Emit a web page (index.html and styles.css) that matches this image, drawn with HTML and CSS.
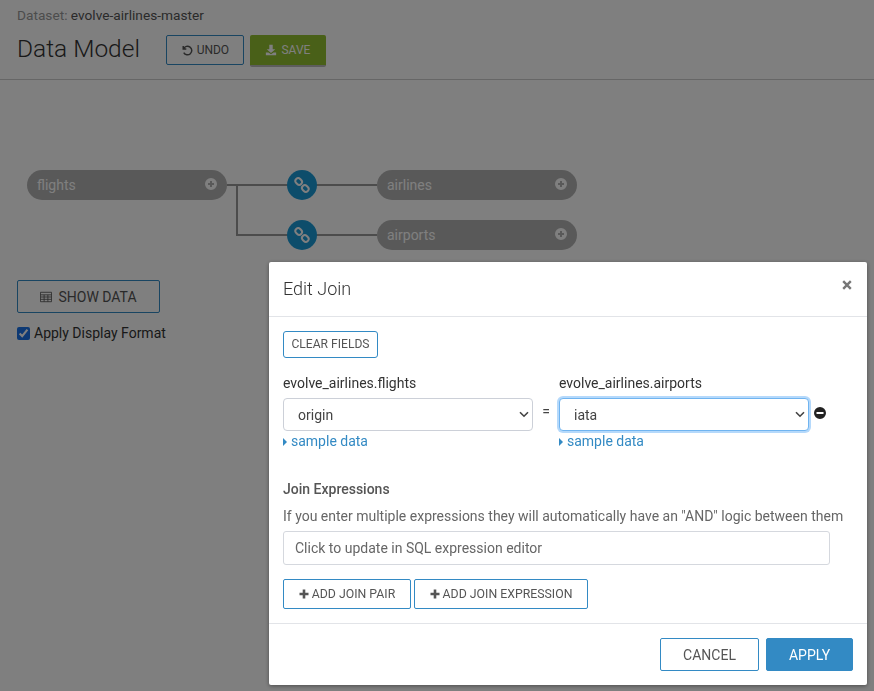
FILE: index.html
```html
<!DOCTYPE html>
<html lang="en">
<head>
  <meta charset="UTF-8">
  <title>Data Model</title>
  <link rel="stylesheet" href="styles.css">
</head>
<body>
  <div class="page-head">
    <div class="dataset"><span class="dataset-label">Dataset:</span> evolve-airlines-master</div>
    <div class="title-row">
      <h1>Data Model</h1>
      <button class="btn btn-undo">
        <svg class="icon" viewBox="0 0 14 14"><path d="M2.6 2.2v3.6h3.6M3 5.6a5 5 0 1 1 .2 4.4" fill="none" stroke="currentColor" stroke-width="1.7"/></svg>
        UNDO
      </button>
      <button class="btn btn-save">
        <svg class="icon" viewBox="0 0 14 14"><path d="M5 1h4v5h3L7 10.5 2 6h3z M1 10h3l3 2 3-2h3v3H1z" fill="currentColor"/></svg>
        SAVE
      </button>
    </div>
  </div>

  <div class="diagram">
    <svg class="links" width="874" height="120" viewBox="0 0 874 120">
      <path d="M227 35H377M237 35V85H377" fill="none" stroke="#999" stroke-width="2"/>
    </svg>

    <div class="node node-flights">flights
      <svg class="node-add" viewBox="0 0 12 12"><path d="M6 0a6 6 0 1 0 0 12A6 6 0 0 0 6 0zM5 3h2v2h2v2H7v2H5V7H3V5h2z" fill="currentColor" fill-rule="evenodd"/></svg>
    </div>
    <div class="node node-airlines">airlines
      <svg class="node-add" viewBox="0 0 12 12"><path d="M6 0a6 6 0 1 0 0 12A6 6 0 0 0 6 0zM5 3h2v2h2v2H7v2H5V7H3V5h2z" fill="currentColor" fill-rule="evenodd"/></svg>
    </div>
    <div class="node node-airports">airports
      <svg class="node-add" viewBox="0 0 12 12"><path d="M6 0a6 6 0 1 0 0 12A6 6 0 0 0 6 0zM5 3h2v2h2v2H7v2H5V7H3V5h2z" fill="currentColor" fill-rule="evenodd"/></svg>
    </div>

    <div class="link link-airlines">
      <svg viewBox="0 0 18 18"><g fill="none" stroke="currentColor" stroke-width="2"><rect x="2.2" y="2.7" width="7" height="5.6" rx="2.8" transform="rotate(45 5.7 5.5)"/><rect x="8.8" y="9.7" width="7" height="5.6" rx="2.8" transform="rotate(45 12.3 12.5)"/></g></svg>
    </div>
    <div class="link link-airports">
      <svg viewBox="0 0 18 18"><g fill="none" stroke="currentColor" stroke-width="2"><rect x="2.2" y="2.7" width="7" height="5.6" rx="2.8" transform="rotate(45 5.7 5.5)"/><rect x="8.8" y="9.7" width="7" height="5.6" rx="2.8" transform="rotate(45 12.3 12.5)"/></g></svg>
    </div>
  </div>

  <div class="data-controls">
    <button class="btn btn-show">
      <svg class="icon" viewBox="0 0 14 12"><path d="M.5.5h13v11H.5zM.5 3.5h13M.5 6h13M.5 8.7h13M4.8 3.5v8M9.2 3.5v8" fill="none" stroke="currentColor"/></svg>
      SHOW DATA
    </button>
    <label class="check-row"><input type="checkbox" checked> Apply Display Format</label>
  </div>

  <div class="backdrop"></div>

  <div class="modal">
    <div class="modal-header">
      <h2>Edit Join</h2>
      <svg class="modal-close" viewBox="0 0 10 10"><path d="M1.2 1.2l7.6 7.6M8.8 1.2L1.2 8.8" stroke="currentColor" stroke-width="2.4" fill="none"/></svg>
    </div>

    <div class="modal-body">
      <button class="btn btn-clear">CLEAR FIELDS</button>

      <div class="join-row">
        <div class="join-col">
          <label class="join-label">evolve_airlines.flights</label>
          <select class="join-select"><option>origin</option></select>
          <a class="sample-link"><span class="caret"></span>sample data</a>
        </div>
        <div class="equals">=</div>
        <div class="join-col">
          <label class="join-label">evolve_airlines.airports</label>
          <select class="join-select is-focused"><option>iata</option></select>
          <a class="sample-link"><span class="caret"></span>sample data</a>
        </div>
        <svg class="remove-pair" viewBox="0 0 12 12"><path d="M6 0a6 6 0 1 0 0 12A6 6 0 0 0 6 0zM2.5 5h7v2h-7z" fill="currentColor" fill-rule="evenodd"/></svg>
      </div>

      <div class="expr-title">Join Expressions</div>
      <div class="expr-help">If you enter multiple expressions they will automatically have an "AND" logic between them</div>
      <input class="expr-input" type="text" placeholder="Click to update in SQL expression editor">

      <div class="add-row">
        <button class="btn btn-add btn-add-pair">
          <svg class="icon-plus" viewBox="0 0 10 10"><path d="M5 .5v9M.5 5h9" stroke="currentColor" stroke-width="2.6" fill="none"/></svg>
          ADD JOIN PAIR
        </button>
        <button class="btn btn-add btn-add-expr">
          <svg class="icon-plus" viewBox="0 0 10 10"><path d="M5 .5v9M.5 5h9" stroke="currentColor" stroke-width="2.6" fill="none"/></svg>
          ADD JOIN EXPRESSION
        </button>
      </div>
    </div>

    <div class="modal-footer">
      <button class="btn btn-cancel">CANCEL</button>
      <button class="btn btn-apply">APPLY</button>
    </div>
  </div>
</body>
</html>
```

FILE: styles.css
```css
* {
  box-sizing: border-box;
}

html, body {
  height: 100%;
}

body {
  margin: 0;
  font-family: Roboto, "Liberation Sans", sans-serif;
  font-size: 14px;
  color: #444;
  background: #fff;
  overflow: hidden;
}

.page-head {
  height: 80px;
  padding: 8px 17px 0;
  border-bottom: 1px solid #ccc;
}

.dataset {
  font-size: 13.7px;
  line-height: 15px;
  color: #555;
}

.dataset-label {
  color: #999;
}

.title-row {
  display: flex;
  align-items: flex-start;
  margin-top: 10px;
}

h1 {
  margin: 0 26px 0 0;
  font-size: 24.5px;
  line-height: 32px;
  font-weight: 300;
  color: #333;
}

.btn {
  display: inline-flex;
  align-items: center;
  justify-content: center;
  gap: 4px;
  height: 30px;
  padding: 0;
  font-family: inherit;
  font-size: 12px;
  color: #555;
  background: #fff;
  border: 1px solid #338ac4;
  border-radius: 2px;
}

.icon {
  width: 12px;
  height: 12px;
}

.btn-undo {
  width: 78px;
  margin: 2px 6px 0 0;
}

.btn-save {
  width: 76px;
  height: 32px;
  margin-top: 2px;
  color: #fff;
  background: #92c030;
  border: 0;
  border-bottom: 2px solid #bbb;
}

.diagram {
  position: relative;
  height: 120px;
  margin-top: 70px;
}

.links {
  position: absolute;
  left: 0;
  top: 0;
}

.node {
  position: absolute;
  width: 200px;
  height: 30px;
  padding-left: 10px;
  font-size: 14px;
  line-height: 30px;
  color: #fff;
  background: #b3b3b3;
  border-radius: 15px;
}

.node-flights {
  left: 27px;
  top: 20px;
}

.node-airlines {
  left: 377px;
  top: 20px;
}

.node-airports {
  left: 377px;
  top: 70px;
}

.node-add {
  position: absolute;
  right: 10px;
  top: 8px;
  width: 12px;
  height: 12px;
  color: #fff;
}

.link {
  position: absolute;
  left: 287px;
  width: 30px;
  height: 30px;
  padding: 6px;
  color: #fff;
  background: #1b9bd7;
  border-radius: 50%;
}

.link svg {
  display: block;
}

.link-airlines {
  top: 20px;
}

.link-airports {
  top: 70px;
}

.data-controls {
  padding: 10px 17px 0;
}

.btn-show {
  width: 143px;
  height: 33px;
  gap: 6px;
  font-size: 14px;
}

.check-row {
  display: flex;
  align-items: center;
  gap: 4px;
  margin-top: 12px;
  font-size: 14px;
  line-height: 16px;
  color: #333;
}

.check-row input {
  width: 13px;
  height: 13px;
  margin: 0;
  accent-color: #1a73e8;
}

.backdrop {
  position: fixed;
  inset: 0;
  background: rgba(0, 0, 0, 0.5);
}

.modal {
  position: fixed;
  left: 269px;
  top: 262px;
  width: 598px;
  height: 423px;
  background: #fff;
  border-radius: 2px;
  box-shadow: 0 1px 4px rgba(0, 0, 0, 0.4);
}

.modal-header {
  position: relative;
  height: 55px;
  padding: 16px 14px 0;
  border-bottom: 1px solid #e2e4e8;
}

h2 {
  margin: 0;
  font-size: 18px;
  line-height: 21px;
  font-weight: 300;
  color: #333;
}

.modal-close {
  position: absolute;
  right: 15px;
  top: 18px;
  width: 10px;
  height: 10px;
  color: #777;
}

.modal-body {
  height: 306px;
  padding: 14px 14px 0;
}

.btn-clear {
  width: 95px;
  height: 27px;
  padding-bottom: 2px;
  font-size: 12.1px;
  border-radius: 3px;
}

.join-row {
  display: flex;
  align-items: flex-start;
  margin-top: 17px;
}

.join-col {
  width: 250px;
  flex: none;
}

.join-label {
  display: block;
  height: 23px;
  font-size: 14px;
  line-height: 16px;
  color: #333;
}

.join-select {
  display: block;
  width: 250px;
  height: 33px;
  padding: 0 14px;
  font-family: inherit;
  font-size: 14px;
  color: #444;
  appearance: none;
  background: #fff url("data:image/svg+xml,%3Csvg xmlns='http://www.w3.org/2000/svg' width='10' height='7' viewBox='0 0 10 7'%3E%3Cpath d='M1 1.2l4 4 4-4' fill='none' stroke='%23444' stroke-width='1.6'/%3E%3C/svg%3E") no-repeat right 3px center;
  border: 1px solid #ccd0d8;
  border-radius: 4px;
}

.join-select.is-focused {
  border-color: #70b4f0;
  box-shadow: 0 0 0 2px #b5d9fb;
}

.sample-link {
  display: block;
  margin-top: 2px;
  font-size: 14px;
  line-height: 17px;
  color: #338ac4;
}

.caret {
  display: inline-block;
  margin-right: 4px;
  border-left: 4px solid #338ac4;
  border-top: 4.5px solid transparent;
  border-bottom: 4.5px solid transparent;
}

.equals {
  width: 26px;
  flex: none;
  padding-top: 22px;
  font-size: 14px;
  line-height: 28px;
  text-align: center;
  color: #444;
}

.remove-pair {
  width: 12px;
  height: 12px;
  margin: 32px 0 0 5px;
  color: #222;
}

.expr-title {
  margin-top: 31px;
  font-size: 14px;
  line-height: 16px;
  font-weight: 500;
  color: #555;
}

.expr-help {
  margin-top: 11px;
  font-size: 14px;
  line-height: 16px;
  color: #666;
}

.expr-input {
  display: block;
  width: 547px;
  height: 34px;
  margin-top: 7px;
  padding: 0 11px;
  font-family: inherit;
  font-size: 14px;
  border: 1px solid #d5d8de;
  border-radius: 3px;
}

.expr-input::placeholder {
  color: #666;
}

.add-row {
  display: flex;
  gap: 3px;
  margin-top: 14px;
}

.btn-add {
  height: 30px;
  gap: 3px;
  font-size: 12.3px;
}

.btn-add-pair {
  width: 128px;
}

.btn-add-expr {
  width: 174px;
}

.icon-plus {
  width: 10px;
  height: 10px;
}

.modal-footer {
  display: flex;
  justify-content: flex-end;
  gap: 7px;
  height: 62px;
  padding: 14px 14px 0;
  border-top: 1px solid #e2e4e8;
}

.btn-cancel {
  width: 99px;
  height: 33px;
  font-size: 14px;
}

.btn-apply {
  width: 87px;
  height: 33px;
  font-size: 14px;
  color: #fff;
  background: #338ac4;
}
```
